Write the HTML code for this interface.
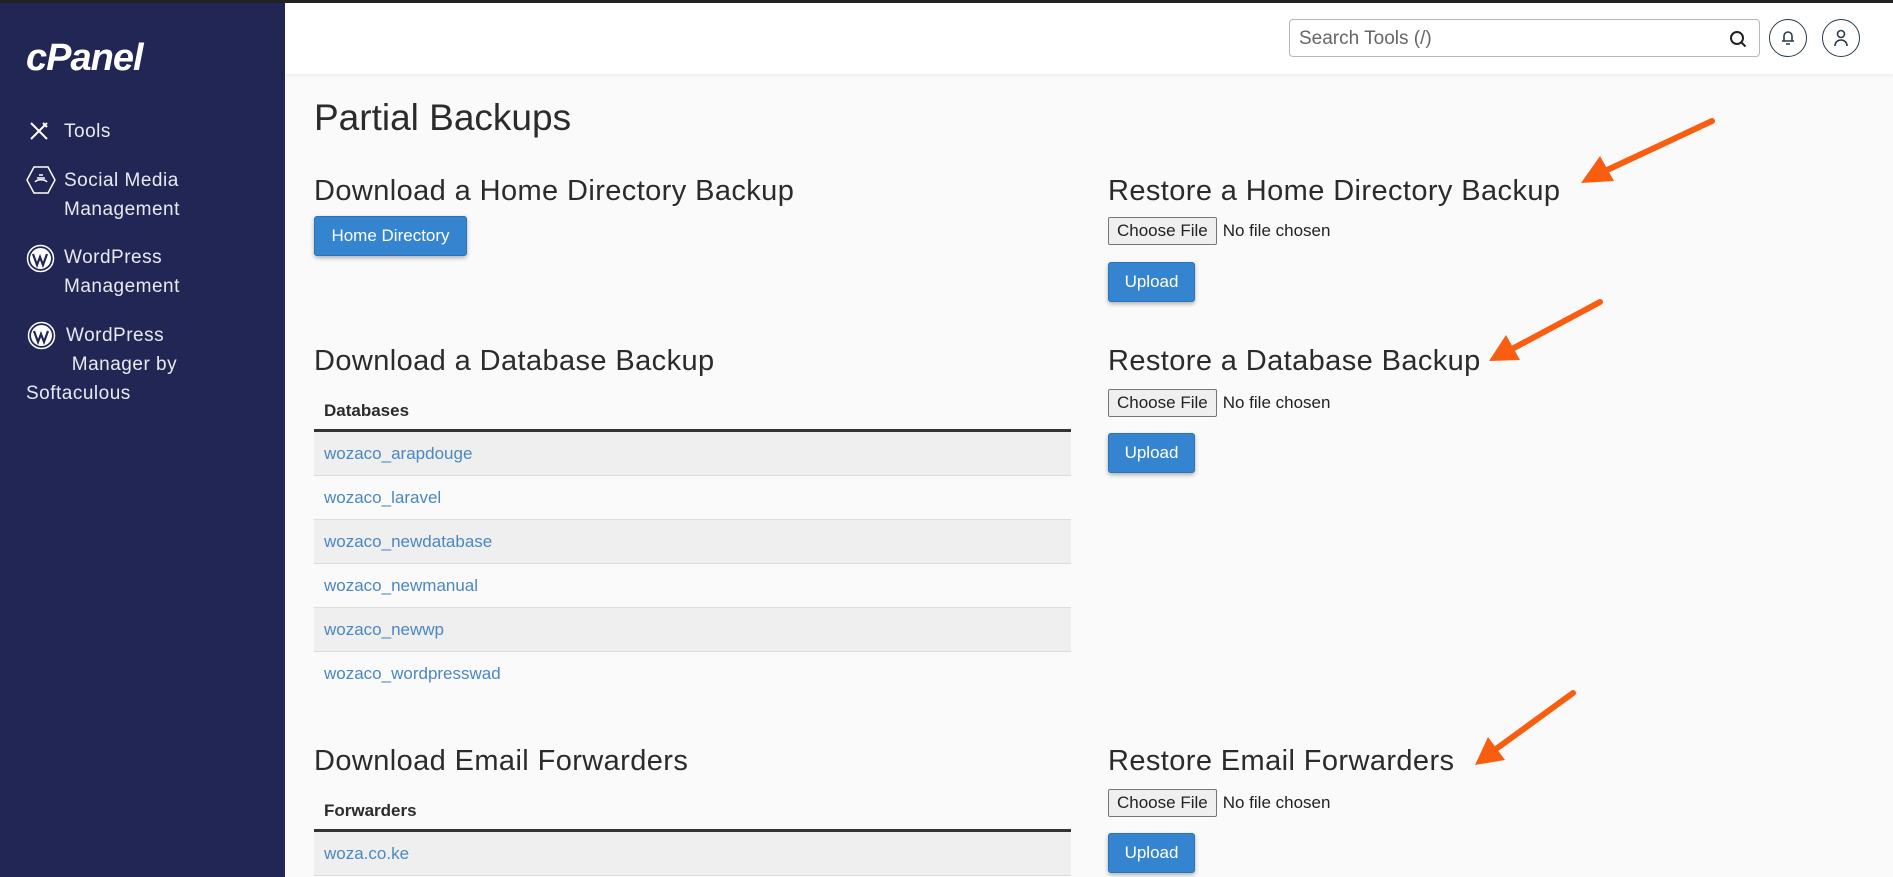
<!DOCTYPE html>
<html><head><meta charset="utf-8"><style>
*{box-sizing:border-box;margin:0;padding:0}
body{width:1893px;height:877px;overflow:hidden;background:#fafafa;font-family:"Liberation Sans",sans-serif;color:#293a4a;position:relative}
.top{position:absolute;left:0;top:0;width:1893px;height:3px;background:#222}
.side{position:absolute;left:0;top:3px;width:285px;height:874px;background:#212654;color:#e8eaf2}
.logo{position:absolute;left:26px;top:34px;font:italic bold 38px "Liberation Sans",sans-serif;color:#fff;letter-spacing:-1px}
.si{position:absolute;font-size:19px;line-height:29px;letter-spacing:.5px}
.hdr{position:absolute;left:285px;top:3px;width:1608px;height:71px;background:#fff;box-shadow:0 2px 4px rgba(0,0,0,.05)}
.search{position:absolute;left:1289px;top:19px;width:471px;height:38px;border:1px solid #b8b8b8;border-radius:4px;background:#fff;font-size:19px;color:#666;padding:8px 9px}
.circ{position:absolute;top:19px;width:38px;height:38px;border:1.5px solid #293a4a;border-radius:50%}
h1{position:absolute;left:314px;top:97px;font-weight:normal;font-size:37px;color:#2b2b2b}
h2{position:absolute;font-weight:normal;font-size:29px;color:#2b2b2b;letter-spacing:.4px}
.btn{position:absolute;background:#3584cf;color:#fff;border:1px solid #2c73b8;border-radius:3px;box-shadow:0 2px 4px rgba(0,0,0,.3);font-size:17px;text-align:center}
.cf{position:absolute;height:27px;font-size:17px;color:#222}
.cf span.b{display:inline-block;border:1px solid #767676;background:#efefef;border-radius:2px;padding:3px 8px;margin-right:6px}
.tbl{position:absolute;left:314px;width:757px}
.th{height:44px;font-weight:bold;font-size:17px;padding:13px 10px;border-bottom:3px solid #333;color:#2b2b2b}
.tr{height:44px;font-size:17px;color:#4a87c3;padding:12px 10px;border-bottom:1px solid #ddd}
</style></head><body>
<div class="top"></div>
<div class="side">
<div class="logo">cPanel</div>
<svg style="position:absolute;left:28px;top:117px" width="22" height="22" viewBox="0 0 22 22" fill="none" stroke="#fff" stroke-width="2"><path d="M3 3l16 16M19 3L3 19M15 3l4 4"/></svg>
<div class="si" style="left:64px;top:114px">Tools</div>
<svg style="position:absolute;left:26px;top:163px" width="30" height="28" viewBox="0 0 30 28" fill="none" stroke="#fff" stroke-width="1.5"><path d="M8 1h14l7 13-7 13H8L1 14z"/><path d="M9 16c2-3 10-3 12 0M11 12h8M13 9h4"/></svg>
<div class="si" style="left:64px;top:163px">Social Media<br>Management</div>
<svg style="position:absolute;left:26px;top:241px" width="29" height="29" viewBox="0 0 29 29"><circle cx="14.5" cy="14.5" r="13" fill="none" stroke="#fff" stroke-width="1.5"/><circle cx="14.5" cy="14.5" r="10.5" fill="#fff"/><path d="M7 10l4 11 3-8 3 8 4-11" stroke="#212654" stroke-width="2.2" fill="none"/></svg>
<div class="si" style="left:64px;top:240px">WordPress<br>Management</div>
<svg style="position:absolute;left:27px;top:318px" width="29" height="29" viewBox="0 0 29 29"><circle cx="14.5" cy="14.5" r="13" fill="none" stroke="#fff" stroke-width="1.5"/><circle cx="14.5" cy="14.5" r="10.5" fill="#fff"/><path d="M7 10l4 11 3-8 3 8 4-11" stroke="#212654" stroke-width="2.2" fill="none"/></svg>
<div class="si" style="left:66px;top:318px">WordPress<br>&nbsp;Manager by</div>
<div class="si" style="left:26px;top:376px">Softaculous</div>
</div>
<div class="hdr"></div>
<div class="search">Search Tools (/)
<svg style="position:absolute;right:12px;top:10px" width="18" height="18" viewBox="0 0 18 18" fill="none" stroke="#222" stroke-width="2"><circle cx="8" cy="8" r="6"/><path d="M12.5 12.5l4 4"/></svg></div>
<div class="circ" style="left:1769px"><svg style="position:absolute;left:11px;top:10px" width="14" height="16" viewBox="0 0 14 16" fill="none" stroke="#293a4a" stroke-width="1.6"><path d="M3 11V6a4 4 0 018 0v5M1 11h12M5 14h4"/></svg></div>
<div class="circ" style="left:1822px"><svg style="position:absolute;left:11px;top:9px" width="14" height="18" viewBox="0 0 14 18" fill="none" stroke="#293a4a" stroke-width="1.6"><circle cx="7" cy="5" r="3.5"/><path d="M1 17c0-4 3-6 6-6s6 2 6 6"/></svg></div>

<h1>Partial Backups</h1>
<h2 style="left:314px;top:175px">Download a Home Directory Backup</h2>
<div class="btn" style="left:314px;top:216px;width:153px;height:40px;line-height:38px">Home Directory</div>

<h2 style="left:1108px;top:175px">Restore a Home Directory Backup</h2>
<div class="cf" style="left:1108px;top:217px"><span class="b">Choose File</span>No file chosen</div>
<div class="btn" style="left:1108px;top:262px;width:87px;height:40px;line-height:38px">Upload</div>

<h2 style="left:314px;top:345px">Download a Database Backup</h2>
<div class="tbl" style="top:388px">
<div class="th">Databases</div>
<div class="tr" style="background:#efefef">wozaco_arapdouge</div>
<div class="tr" style="background:#fafafa">wozaco_laravel</div>
<div class="tr" style="background:#efefef">wozaco_newdatabase</div>
<div class="tr" style="background:#fafafa">wozaco_newmanual</div>
<div class="tr" style="background:#efefef">wozaco_newwp</div>
<div class="tr" style="background:#fafafa;border:0">wozaco_wordpresswad</div>
</div>

<h2 style="left:1108px;top:345px">Restore a Database Backup</h2>
<div class="cf" style="left:1108px;top:389px"><span class="b">Choose File</span>No file chosen</div>
<div class="btn" style="left:1108px;top:433px;width:87px;height:40px;line-height:38px">Upload</div>

<h2 style="left:314px;top:745px">Download Email Forwarders</h2>
<div class="tbl" style="top:788px">
<div class="th">Forwarders</div>
<div class="tr" style="background:#efefef">woza.co.ke</div>
</div>

<h2 style="left:1108px;top:745px">Restore Email Forwarders</h2>
<div class="cf" style="left:1108px;top:789px"><span class="b">Choose File</span>No file chosen</div>
<div class="btn" style="left:1108px;top:833px;width:87px;height:40px;line-height:38px">Upload</div>

<svg style="position:absolute;left:0;top:0" width="1893" height="877">
<g stroke="#f95d0f" stroke-width="6" fill="#f95d0f" stroke-linecap="round">
<line x1="1712" y1="121" x2="1605" y2="171"/><polygon points="1581,183 1600,156 1614,181" stroke="none"/>
<line x1="1600" y1="302" x2="1512" y2="349"/><polygon points="1489,361 1506,335 1520,360" stroke="none"/>
<line x1="1573" y1="693" x2="1496" y2="749"/><polygon points="1475,765 1488,737 1505,760" stroke="none"/>
</g></svg>
</body></html>
